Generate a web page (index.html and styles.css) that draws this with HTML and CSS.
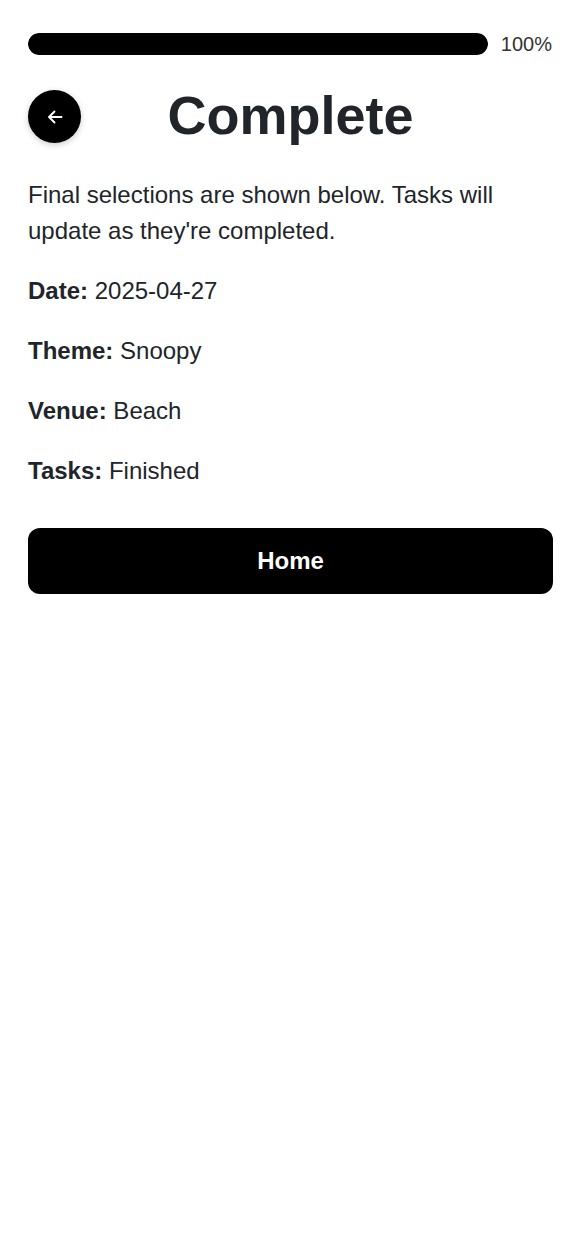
FILE: index.html
```html
<!DOCTYPE html>
<html lang="en">
<head>
<meta charset="utf-8">
<title>Complete</title>
<link rel="stylesheet" href="styles.css">
</head>
<body>
<main class="page">
  <div class="progress-row">
    <div class="progress-track"><div class="progress-fill" style="width:100%"></div></div>
    <span class="progress-label">100%</span>
  </div>
  <header class="header">
    <button class="back-btn" aria-label="Back">
      <svg width="16" height="16" viewBox="0 0 16 16" fill="none" stroke="#fff" stroke-width="1.9" stroke-linecap="round" stroke-linejoin="round"><path d="M14.5 8H2M7.5 2.5L2 8l5.5 5.5"/></svg>
    </button>
    <h1 class="title">Complete</h1>
  </header>
  <p class="intro">Final selections are shown below. Tasks will update as they're completed.</p>
  <p class="item"><strong>Date:</strong> 2025-04-27</p>
  <p class="item"><strong>Theme:</strong> Snoopy</p>
  <p class="item"><strong>Venue:</strong> Beach</p>
  <p class="item"><strong>Tasks:</strong> Finished</p>
  <button class="home-btn">Home</button>
</main>
</body>
</html>
```
FILE: styles.css
```css
* { box-sizing: border-box; }
html, body { margin: 0; padding: 0; background: #fff; }
body {
  font-family: "Liberation Sans", Arial, sans-serif;
  color: #212529;
}
.page {
  padding: 33px 26px 0 28px;
  display: flex;
  flex-direction: column;
}
.progress-row {
  display: flex;
  align-items: center;
  gap: 13px;
  height: 22px;
}
.progress-track {
  flex: 1;
  height: 22px;
  background: #e5e5e5;
  border-radius: 11px;
  overflow: hidden;
}
.progress-fill {
  height: 100%;
  background: #000;
  border-radius: 11px;
}
.progress-label {
  font-size: 20px;
  line-height: 22px;
  color: #333;
  padding-right: 1px;
}
.header {
  position: relative;
  display: flex;
  align-items: center;
  justify-content: center;
  height: 53px;
  margin-top: 35px;
}
.back-btn {
  position: absolute;
  left: 0;
  top: 0;
  width: 53px;
  height: 53px;
  border-radius: 50%;
  background: #000;
  border: none;
  padding: 0;
  display: flex;
  align-items: center;
  justify-content: center;
  box-shadow: 0 2px 6px rgba(0,0,0,0.2);
}
.title {
  margin: 0;
  padding-bottom: 4px;
  font-size: 54px;
  font-weight: 700;
  color: #212529;
  line-height: 1;
}
.intro {
  margin: 34px 0 0;
  font-size: 24px;
  line-height: 36px;
}
.item {
  margin: 24px 0 0;
  font-size: 24px;
  line-height: 36px;
}
.home-btn {
  margin-top: 39px;
  height: 66px;
  width: 100%;
  background: #000;
  color: #fff;
  border: none;
  border-radius: 12px;
  font-family: "Liberation Sans", Arial, sans-serif;
  font-size: 24px;
  font-weight: 700;
}
```
